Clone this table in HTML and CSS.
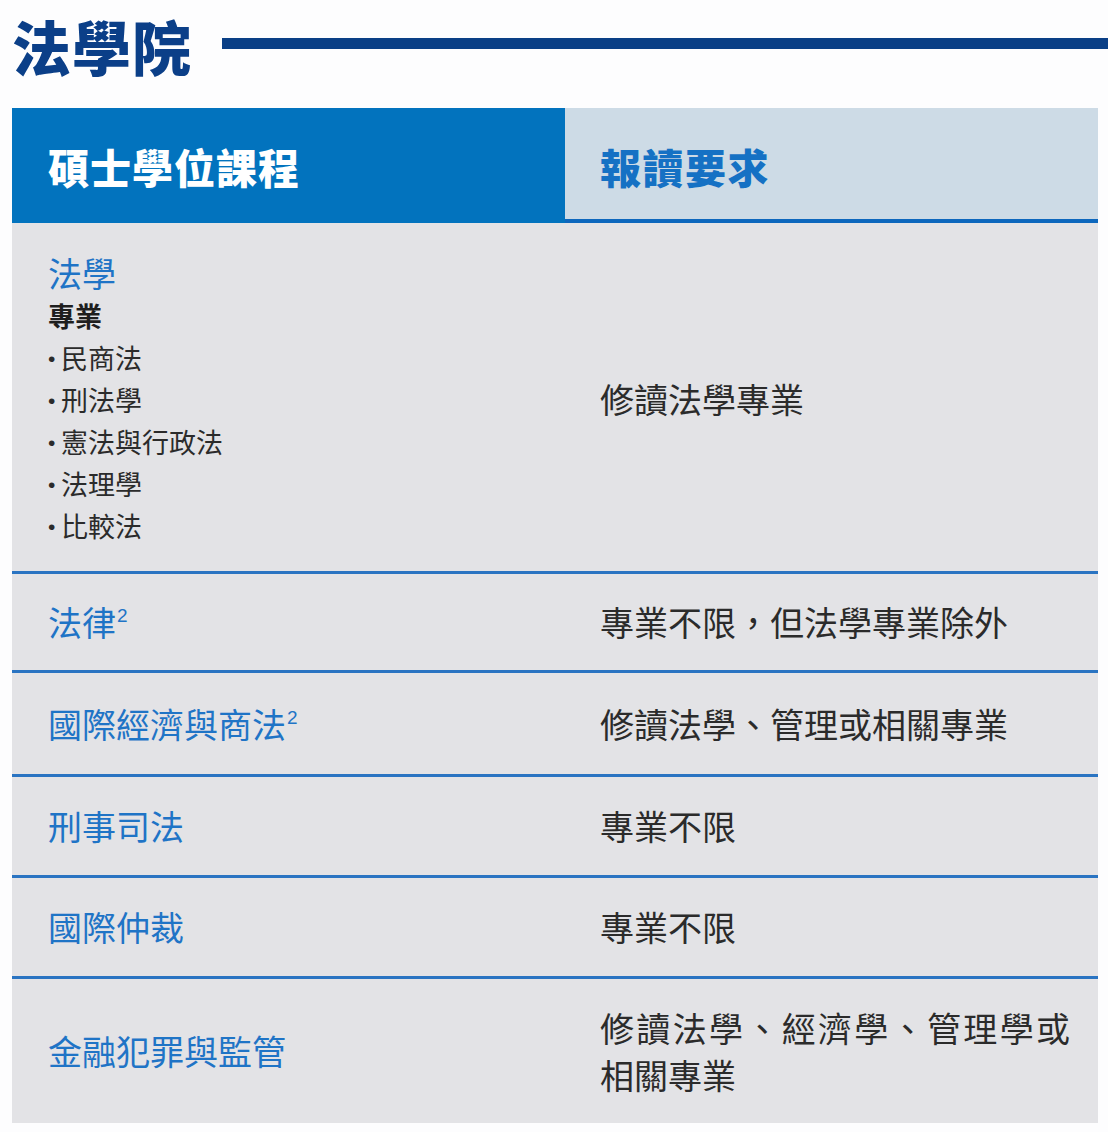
FILE: index.html
```html
<!DOCTYPE html>
<html lang="zh-Hant">
<head>
<meta charset="utf-8">
<title>法學院</title>
<link rel="stylesheet" href="styles.css">
</head>
<body>
<div class="page">
  <div class="top">
    <h1 class="title">法學院</h1>
    <div class="rule"></div>
  </div>
  <div class="table">
    <div class="head head-left">碩士學位課程</div>
    <div class="head head-right">報讀要求</div>

    <div class="cell left first">
      <div class="name">法學</div>
      <div class="sub">專業</div>
      <ul class="list">
        <li><span class="dot">•</span>民商法</li>
        <li><span class="dot">•</span>刑法學</li>
        <li><span class="dot">•</span>憲法與行政法</li>
        <li><span class="dot">•</span>法理學</li>
        <li><span class="dot">•</span>比較法</li>
      </ul>
    </div>
    <div class="cell right first">修讀法學專業</div>

    <div class="cell left sep"><span class="name">法律<span class="sup">2</span></span></div>
    <div class="cell right sep">專業不限，但法學專業除外</div>

    <div class="cell left sep tall"><span class="name">國際經濟與商法<span class="sup">2</span></span></div>
    <div class="cell right sep tall">修讀法學、管理或相關專業</div>

    <div class="cell left sep mid"><span class="name">刑事司法</span></div>
    <div class="cell right sep mid">專業不限</div>

    <div class="cell left sep mid"><span class="name">國際仲裁</span></div>
    <div class="cell right sep mid">專業不限</div>

    <div class="cell left sep last"><span class="name">金融犯罪與監管</span></div>
    <div class="cell right sep last justify">修讀法學、經濟學、管理學或相關專業</div>
  </div>
</div>
</body>
</html>
```

FILE: styles.css
```css
* { box-sizing: border-box; }
html, body { margin: 0; padding: 0; background: #fdfdfe; }
body {
  font-family: "Noto Sans CJK TC", "Noto Sans CJK SC", "Noto Sans", sans-serif;
  color: #2b2b2b;
}
.page { width: 1108px; }
.top {
  height: 90px;
  display: flex;
  align-items: center;
  padding-left: 12px;
}
.title {
  margin: 0;
  font-size: 59px;
  line-height: 1;
  font-weight: 900;
  color: #0b3f88;
  letter-spacing: 1px;
}
.rule {
  flex: 1;
  height: 11px;
  margin-left: 30px;
  margin-top: -4px;
  background: #0a3f86;
}
.table {
  margin: 18px 0 0 12px;
  width: 1086px;
  display: grid;
  grid-template-columns: 553px 533px;
  background: #e3e3e6;
}
.head {
  height: 115px;
  display: flex;
  align-items: center;
  font-size: 41px;
  font-weight: 900;
  letter-spacing: 1px;
  padding-top: 4px;
  border-bottom: 4px solid #0d67bd;
}
.head-left {
  background: #0273be;
  color: #ffffff;
  padding-left: 36px;
  border-bottom-color: #0273be;
}
.head-right {
  background: #cddbe6;
  color: #1571c4;
  padding-left: 35px;
  letter-spacing: 1.5px;
}
.cell {
  display: flex;
  align-items: center;
  font-size: 34px;
  line-height: 48px;
  padding-top: 24px;
  padding-bottom: 24px;
}
.cell.left { padding-left: 36px; }
.cell.right { padding-left: 35px; padding-right: 28px; }
.cell.first { padding-top: 28px; padding-bottom: 24px; }
.cell.left.first { flex-direction: column; align-items: flex-start; }
.sep { border-top: 3px solid #2a74c2; }
.tall { padding-top: 27px; padding-bottom: 26px; }
.mid { padding-top: 25px; padding-bottom: 25px; }
.last { padding-top: 25px; padding-bottom: 25px; }
.justify { text-align: justify; line-height: 47px; }
.name { color: #1f74c6; font-size: 34px; line-height: 44px; }
.sub { font-size: 27px; font-weight: 700; line-height: 42px; color: #1e1e1e; }
.list { list-style: none; margin: 0; padding: 0; }
.list li { font-size: 27px; line-height: 41px; color: #2b2b2b; }
.dot {
  font-family: "Liberation Sans", sans-serif;
  font-size: 21px;
  display: inline-block;
  width: 13px;
  vertical-align: 3px;
}
.sup {
  font-family: "Liberation Sans", sans-serif;
  font-size: 19px;
  vertical-align: 14px;
  line-height: 1;
  margin-left: 1px;
}
```
